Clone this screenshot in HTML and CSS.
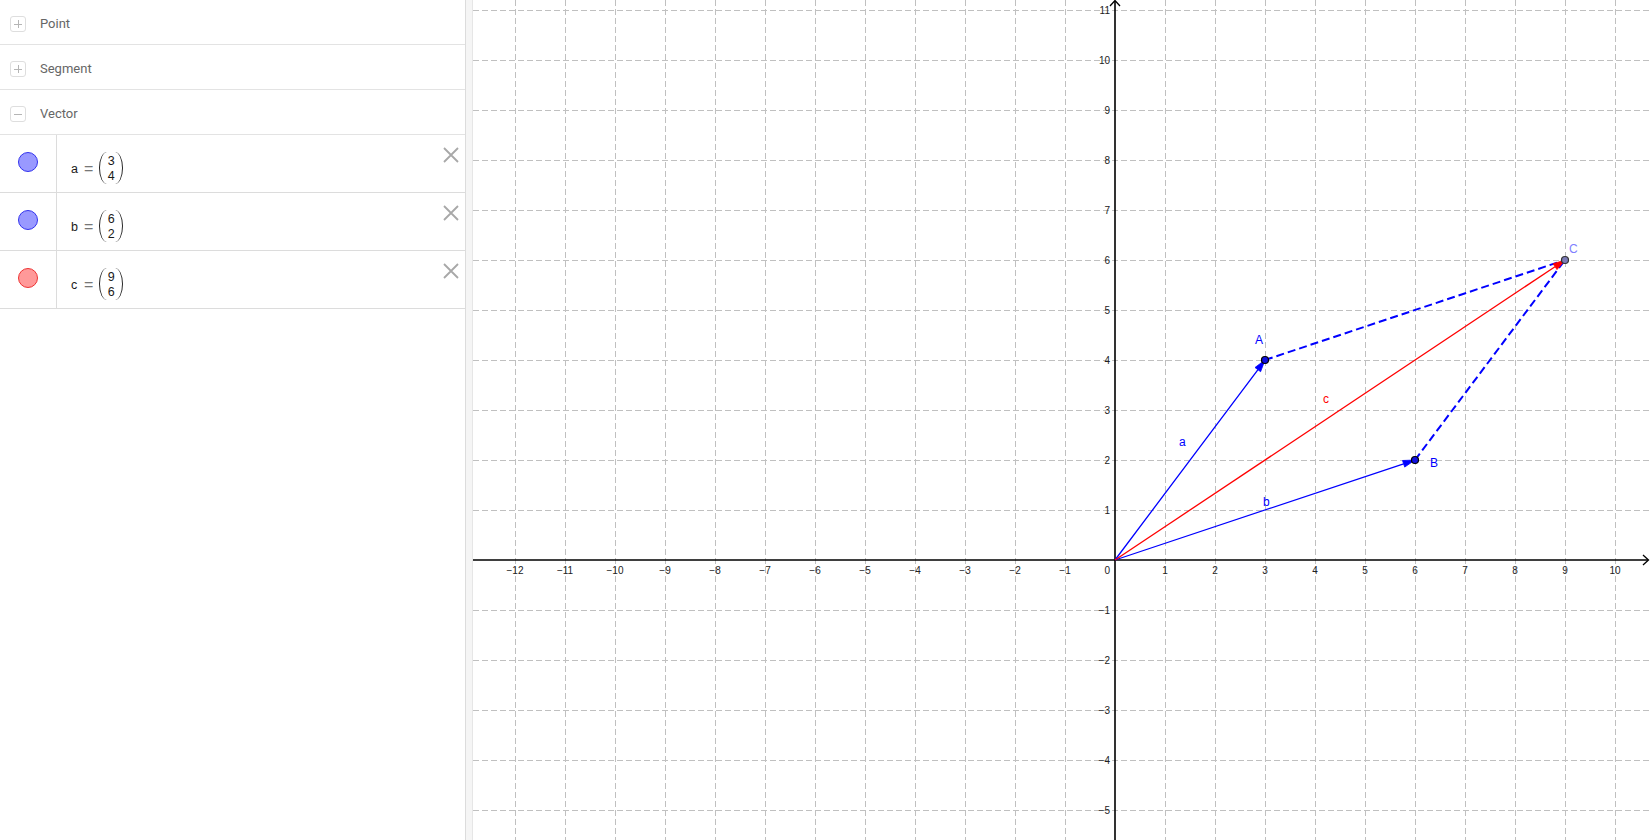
FILE: index.html
```html
<!DOCTYPE html>
<html>
<head>
<meta charset="utf-8">
<title>Vectors</title>
<link rel="stylesheet" href="styles.css">
</head>
<body>
<div class="app">
  <aside class="algebra">
    <div class="group"><span class="toggle plus"></span><span class="group-name">Point</span></div>
    <div class="group"><span class="toggle plus"></span><span class="group-name">Segment</span></div>
    <div class="group"><span class="toggle minus"></span><span class="group-name">Vector</span></div>
    <div class="item">
      <div class="marble-cell"><span class="marble blue"></span></div>
      <div class="formula"><span class="sym">a</span><span class="eq">=</span><span class="vec"><span>3</span><span>4</span></span></div>
      <span class="close"><svg width="16" height="16" viewBox="0 0 16 16"><path d="M1 1L15 15M15 1L1 15"/></svg></span>
    </div>
    <div class="item">
      <div class="marble-cell"><span class="marble blue"></span></div>
      <div class="formula"><span class="sym">b</span><span class="eq">=</span><span class="vec"><span>6</span><span>2</span></span></div>
      <span class="close"><svg width="16" height="16" viewBox="0 0 16 16"><path d="M1 1L15 15M15 1L1 15"/></svg></span>
    </div>
    <div class="item">
      <div class="marble-cell"><span class="marble red"></span></div>
      <div class="formula"><span class="sym">c</span><span class="eq">=</span><span class="vec"><span>9</span><span>6</span></span></div>
      <span class="close"><svg width="16" height="16" viewBox="0 0 16 16"><path d="M1 1L15 15M15 1L1 15"/></svg></span>
    </div>
  </aside>
  <div class="splitter"></div>
  <main class="graphics">
    <svg class="plot" width="1178" height="840" viewBox="472 0 1178 840">
      <path class="grid" d="M514.5 0V840M564.5 0V840M614.5 0V840M664.5 0V840M714.5 0V840M764.5 0V840M814.5 0V840M864.5 0V840M914.5 0V840M964.5 0V840M1014.5 0V840M1064.5 0V840M1164.5 0V840M1214.5 0V840M1264.5 0V840M1314.5 0V840M1364.5 0V840M1414.5 0V840M1464.5 0V840M1514.5 0V840M1564.5 0V840M1614.5 0V840"/>
      <path class="grid" d="M472 10.5H1650M472 60.5H1650M472 110.5H1650M472 160.5H1650M472 210.5H1650M472 260.5H1650M472 310.5H1650M472 360.5H1650M472 410.5H1650M472 460.5H1650M472 510.5H1650M472 610.5H1650M472 660.5H1650M472 710.5H1650M472 760.5H1650M472 810.5H1650"/>
      <path class="axis" d="M472 560H1647M1114 840V1"/>
      <path class="axis-arrow" d="M1642 555L1647.5 560L1642 565M1109 6L1114 0.5L1119 6"/>
      <g class="ticks-x">
        <text x="514" y="574">−12</text><text x="564" y="574">−11</text><text x="614" y="574">−10</text>
        <text x="664" y="574">−9</text><text x="714" y="574">−8</text><text x="764" y="574">−7</text>
        <text x="814" y="574">−6</text><text x="864" y="574">−5</text><text x="914" y="574">−4</text>
        <text x="964" y="574">−3</text><text x="1014" y="574">−2</text><text x="1064" y="574">−1</text>
        <text x="1164" y="574">1</text><text x="1214" y="574">2</text><text x="1264" y="574">3</text>
        <text x="1314" y="574">4</text><text x="1364" y="574">5</text><text x="1414" y="574">6</text>
        <text x="1464" y="574">7</text><text x="1514" y="574">8</text><text x="1564" y="574">9</text>
        <text x="1614" y="574">10</text>
      </g>
      <g class="ticks-y">
        <text x="1109" y="574">0</text>
        <text x="1109" y="14">11</text><text x="1109" y="64">10</text><text x="1109" y="114">9</text>
        <text x="1109" y="164">8</text><text x="1109" y="214">7</text><text x="1109" y="264">6</text>
        <text x="1109" y="314">5</text><text x="1109" y="364">4</text><text x="1109" y="414">3</text>
        <text x="1109" y="464">2</text><text x="1109" y="514">1</text>
        <text x="1109" y="614">−1</text><text x="1109" y="664">−2</text><text x="1109" y="714">−3</text>
        <text x="1109" y="764">−4</text><text x="1109" y="814">−5</text>
      </g>
      <path class="dash-blue" d="M1264 360L1564 260M1414 460L1564 260"/>
      <path class="vec-blue" d="M1114 560L1257 369.6M1114 560L1402.6 463.8"/>
      <polygon class="head-blue" points="1264,360 1259.6,371.7 1254,367.5"/>
      <polygon class="head-blue" points="1414,460 1403.7,467.1 1401.5,460.5"/>
      <path class="vec-red" d="M1114 560L1554 266.7"/>
      <polygon class="head-red" points="1564,260 1556,269.6 1552.1,263.8"/>
      <circle class="pt" cx="1264" cy="360" r="3.5"/>
      <circle class="pt" cx="1414" cy="460" r="3.5"/>
      <circle class="pt-free" cx="1564" cy="260" r="3.5"/>
      <g class="lbl">
        <text class="lbl-blue" x="1254" y="344">A</text>
        <text class="lbl-blue" x="1429" y="467">B</text>
        <text class="lbl-c" x="1568" y="253">C</text>
        <text class="lbl-blue" x="1178" y="446">a</text>
        <text class="lbl-blue" x="1262" y="506">b</text>
        <text class="lbl-red" x="1322" y="403">c</text>
      </g>
    </svg>
  </main>
</div>
</body>
</html>
```
FILE: styles.css
```css
html, body {
  margin: 0;
  padding: 0;
  width: 1650px;
  height: 840px;
  overflow: hidden;
  background: #fff;
  font-family: Roboto, "Liberation Sans", sans-serif;
}

.app {
  display: flex;
  width: 1650px;
  height: 840px;
}

.algebra {
  width: 465px;
  flex: none;
  display: flex;
  flex-direction: column;
  background: #fff;
}

.group {
  height: 44px;
  border-bottom: 1px solid #e3e3e3;
  display: flex;
  align-items: center;
  padding-left: 10px;
  gap: 14px;
}

.toggle {
  width: 14px;
  height: 14px;
  border: 1px solid #dedede;
  border-radius: 3px;
  position: relative;
  margin-top: 4px;
}

.toggle::before,
.toggle::after {
  content: "";
  position: absolute;
  background: #b5b5b5;
}

.toggle::before {
  left: 3px;
  right: 3px;
  top: 6.5px;
  height: 1px;
}

.plus::after {
  top: 3px;
  bottom: 3px;
  left: 6.5px;
  width: 1px;
}

.minus::after {
  display: none;
}

.group-name {
  font-size: 13px;
  color: #666;
  margin-top: 3px;
}

.item {
  height: 57px;
  border-bottom: 1px solid #dcdcdc;
  display: flex;
  align-items: flex-start;
  position: relative;
}

.marble-cell {
  width: 56px;
  height: 57px;
  border-right: 1px solid #dcdcdc;
  flex: none;
  display: flex;
  justify-content: center;
}

.marble {
  width: 18px;
  height: 18px;
  border-radius: 50%;
  margin-top: 17px;
}

.marble.blue {
  background: #9999ff;
  border: 1px solid #3333ee;
}

.marble.red {
  background: #ff9999;
  border: 1px solid #ee3333;
}

.formula {
  display: flex;
  align-items: center;
  margin-top: 17px;
  height: 32px;
  padding-left: 14px;
  font-family: "Liberation Sans", Arial, sans-serif;
  font-size: 12.5px;
  color: #1a1a1a;
}

.sym {
  width: 7px;
  margin-top: 2px;
}

.eq {
  margin-left: 6px;
  margin-right: 6px;
  color: #777;
  font-size: 16px;
  margin-top: 1px;
}

.vec {
  display: flex;
  flex-direction: column;
  align-items: center;
  justify-content: center;
  width: 24px;
  height: 32px;
  box-sizing: border-box;
  border-left: 1.3px solid #222;
  border-right: 1.3px solid #222;
  border-radius: 8px / 16px;
  line-height: 14.5px;
  padding-top: 1px;
}

.close {
  position: absolute;
  right: 6px;
  top: 12px;
  width: 16px;
  height: 16px;
}

.close path {
  stroke: #a8a8a8;
  stroke-width: 1.8;
  fill: none;
}

.splitter {
  width: 6px;
  flex: none;
  background: #f5f5f5;
  border-left: 1px solid #dcdcdc;
  border-right: 1px solid #e6e6e6;
}

.graphics {
  flex: 1;
  overflow: hidden;
  background: #fff;
}

.plot {
  display: block;
}

.grid {
  stroke: #c0c0c0;
  stroke-width: 1;
  stroke-dasharray: 6 3;
  fill: none;
}

.axis {
  stroke: #000;
  stroke-width: 1.6;
  fill: none;
}

.axis-arrow {
  stroke: #000;
  stroke-width: 1.3;
  fill: none;
}

.ticks-x text,
.ticks-y text {
  font-family: "Liberation Sans", Arial, sans-serif;
  font-size: 10px;
  fill: #222;
}

.ticks-x text {
  text-anchor: middle;
}

.ticks-y text {
  text-anchor: end;
}

.vec-blue {
  stroke: #0000ff;
  stroke-width: 1.3;
  fill: none;
}

.head-blue {
  fill: #0000ff;
  stroke: #0000ff;
  stroke-width: 0.8;
}

.vec-red {
  stroke: #ff0000;
  stroke-width: 1.3;
  fill: none;
}

.head-red {
  fill: #ff0000;
  stroke: #ff0000;
  stroke-width: 0.8;
}

.dash-blue {
  stroke: #0000ff;
  stroke-width: 2;
  stroke-dasharray: 8 4;
  fill: none;
}

.pt {
  fill: #1010e0;
  stroke: #000;
  stroke-width: 1.2;
}

.pt-free {
  fill: #7c7cb8;
  stroke: #333;
  stroke-width: 1.2;
}

.lbl text {
  font-family: "Liberation Sans", Arial, sans-serif;
  font-size: 12px;
}

.lbl-blue {
  fill: #0000ff;
}

.lbl-red {
  fill: #ff0000;
}

.lbl-c {
  fill: #8080ff;
}
```
